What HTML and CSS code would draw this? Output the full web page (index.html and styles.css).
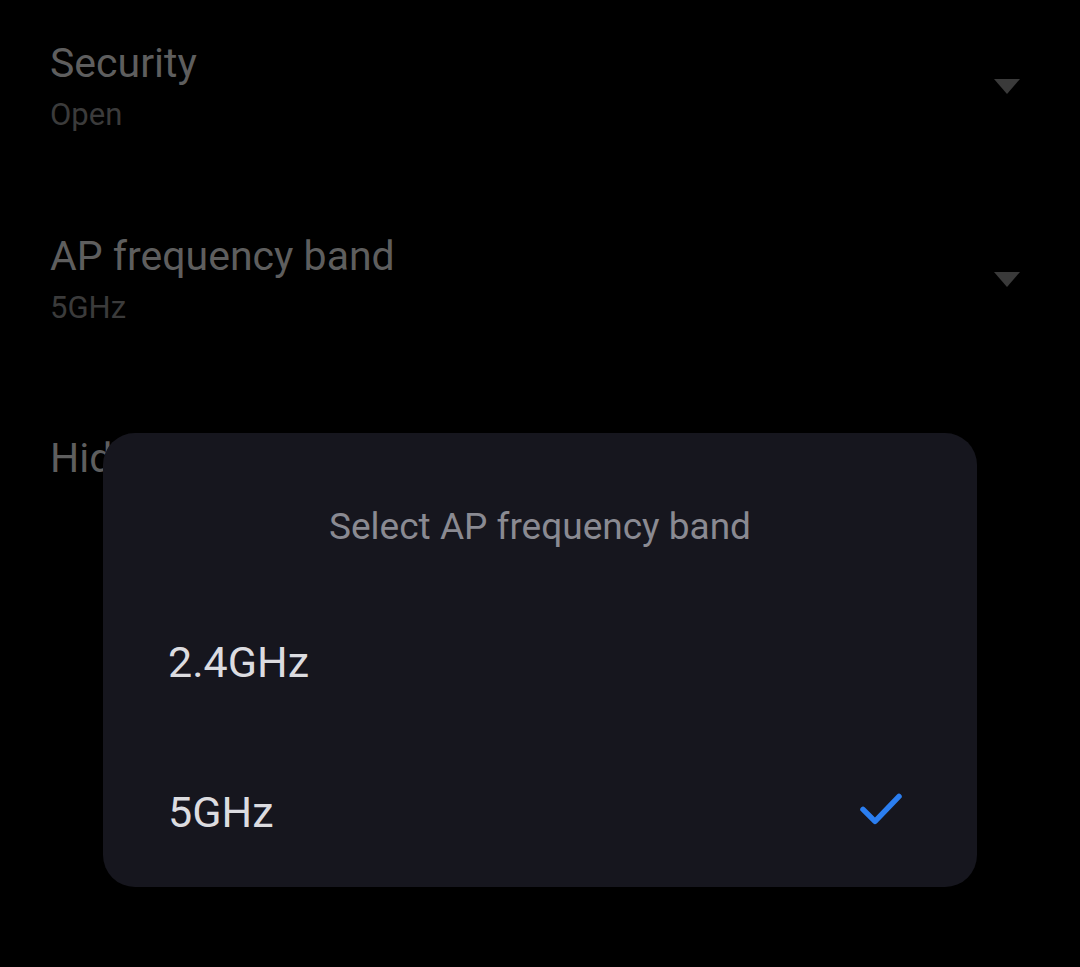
FILE: index.html
```html
<!DOCTYPE html>
<html>
<head>
<meta charset="utf-8">
<link rel="stylesheet" href="styles.css">
</head>
<body>
<div class="settings">
  <div class="row">
    <div class="texts">
      <div class="title">Security</div>
      <div class="sub">Open</div>
    </div>
    <div class="arrow"></div>
  </div>
  <div class="row">
    <div class="texts">
      <div class="title">AP frequency band</div>
      <div class="sub">5GHz</div>
    </div>
    <div class="arrow"></div>
  </div>
  <div class="row row-single">
    <div class="texts">
      <div class="title">Hidden network</div>
    </div>
  </div>
</div>

<div class="dialog">
  <div class="dialog-title">Select AP frequency band</div>
  <div class="option">
    <span class="option-label">2.4GHz</span>
  </div>
  <div class="option">
    <span class="option-label">5GHz</span>
    <svg class="check" width="46" height="46" viewBox="0 0 46 46">
      <path d="M6 20.4 L18 32.4 L42 7.4" fill="none" stroke="#2b7ef0" stroke-width="5.5" stroke-linecap="round" stroke-linejoin="round"/>
    </svg>
  </div>
</div>
</body>
</html>
```

FILE: styles.css
```css
html, body {
  margin: 0;
  padding: 0;
  background: #000;
  width: 1080px;
  height: 967px;
  overflow: hidden;
  font-family: Roboto, "Noto Sans", sans-serif;
}

.settings {
  display: flex;
  flex-direction: column;
  padding: 39px 60px 0 50px;
  gap: 97px;
}

.row {
  display: flex;
  align-items: center;
  justify-content: space-between;
}

.row-single {
  margin-top: 9px;
}

.texts {
  display: flex;
  flex-direction: column;
  gap: 8px;
}

.title {
  font-size: 41px;
  line-height: 48px;
  color: #5e5e5e;
}

.sub {
  font-size: 31px;
  line-height: 40px;
  color: #3b3b3b;
}

.arrow {
  width: 0;
  height: 0;
  border-left: 13px solid transparent;
  border-right: 13px solid transparent;
  border-top: 15px solid #3a3a3a;
  margin-top: -2px;
}

.dialog {
  position: absolute;
  left: 103px;
  top: 433px;
  width: 874px;
  height: 454px;
  box-sizing: border-box;
  background: #16161e;
  border-radius: 32px;
  padding-top: 72px;
  display: flex;
  flex-direction: column;
}

.dialog-title {
  text-align: center;
  font-size: 37px;
  line-height: 44px;
  color: #8a8a92;
  margin-bottom: 38px;
}

.option {
  height: 150px;
  display: flex;
  align-items: center;
  justify-content: space-between;
  padding: 0 74px 0 65px;
}

.option-label {
  font-size: 43px;
  line-height: 150px;
  color: #dcdce0;
}

.check {
  display: block;
}
```
